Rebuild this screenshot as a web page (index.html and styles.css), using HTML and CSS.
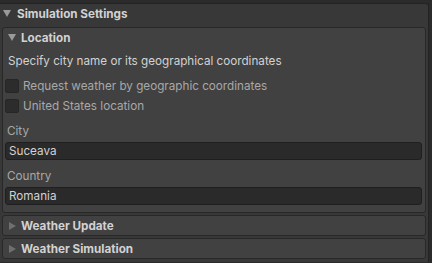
FILE: index.html
```html
<!DOCTYPE html>
<html lang="en">
<head>
    <meta charset="UTF-8">
    <title>Simulation Settings</title>
    <link rel="stylesheet" href="styles.css">
</head>
<body>
    <div class="panel">
        <div class="panel-head"><span class="arrow down"></span>Simulation Settings</div>
        <section class="group">
            <div class="group-head"><span class="arrow down"></span>Location</div>
            <div class="group-body">
                <p class="hint">Specify city name or its geographical coordinates</p>
                <label class="check"><span class="box"></span>Request weather by geographic coordinates</label>
                <label class="check"><span class="box"></span>United States location</label>
                <div class="field">
                    <div class="field-label">City</div>
                    <div class="input">Suceava</div>
                </div>
                <div class="field">
                    <div class="field-label">Country</div>
                    <div class="input">Romania</div>
                </div>
            </div>
        </section>
        <section class="group">
            <div class="group-head"><span class="arrow right"></span>Weather Update</div>
        </section>
        <section class="group">
            <div class="group-head"><span class="arrow right"></span>Weather Simulation</div>
        </section>
    </div>
</body>
</html>
```

FILE: styles.css
```css
body, html {
    margin: 0;
    padding: 0;
    height: 100%;
    overflow: hidden;
    background-color: #2b2b2b;
    font-family: 'Inter', 'Noto Sans', sans-serif;
    font-size: 11.7px;
    color: #c8c8c8;
}
.panel {
    margin: 3px 0 0 -3px;
    width: 430px;
    height: calc(100vh - 5px);
    border: 1px solid #232323;
    border-bottom: 0;
    border-radius: 3px 3px 0 0;
    background-color: #383838;
}
.panel-head {
    height: 19px;
    padding: 0 0 4px 5px;
    display: flex;
    align-items: center;
    font-weight: bold;
    color: #d2d2d2;
}
.panel-head .arrow {
    margin-right: 6px;
}
.arrow {
    display: inline-block;
    width: 0;
    height: 0;
}
.arrow.down {
    border-left: 4px solid transparent;
    border-right: 4px solid transparent;
    border-top: 7px solid #9a9a9a;
}
.arrow.right {
    border-top: 4px solid transparent;
    border-bottom: 4px solid transparent;
    border-left: 7px solid #6f6f6f;
    margin-left: 1px;
}
.group {
    margin: 0 2px 2px 4px;
    border: 1px solid #282828;
    border-radius: 3px;
    background-color: #414141;
}
.group-head {
    height: 19px;
    display: flex;
    align-items: center;
    padding-left: 5px;
    font-weight: bold;
    color: #d2d2d2;
}
.group-head .arrow {
    margin-right: 5px;
}
.group-body {
    padding: 5px 3px 7px 2px;
}
.hint {
    margin: 0 0 6px 0;
    height: 18px;
    line-height: 18px;
    padding-left: 3px;
    color: #d2d2d2;
}
.check {
    display: flex;
    align-items: center;
    height: 20px;
    color: #a8a8a8;
}
.box {
    width: 12px;
    height: 12px;
    margin-right: 4px;
    border: 1px solid #262626;
    border-radius: 2px;
    background-color: #2c2c2c;
}
.field {
    margin-top: 6px;
}
.field + .field {
    margin-top: 7px;
}
.field-label {
    height: 18px;
    line-height: 18px;
    padding-left: 2px;
    color: #a8a8a8;
}
.input {
    margin-top: 2px;
    height: 16px;
    line-height: 16px;
    padding-left: 3px;
    border: 1px solid #1f1f1f;
    border-radius: 3px;
    background-color: #2a2a2a;
    color: #d2d2d2;
}
```
